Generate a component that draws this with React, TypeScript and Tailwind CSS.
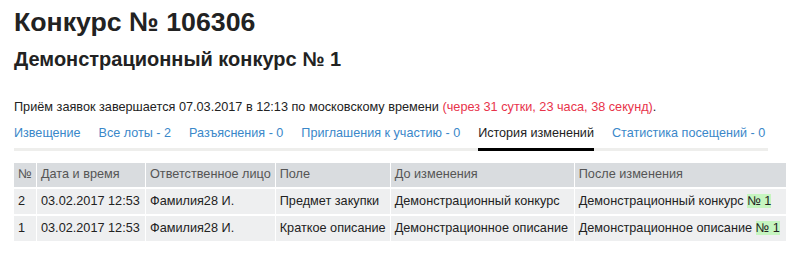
import React from "react";

const tabs = [
  { label: "Извещение" },
  { label: "Все лоты - 2" },
  { label: "Разъяснения - 0" },
  { label: "Приглашения к участию - 0" },
  { label: "История изменений", active: true },
  { label: "Статистика посещений - 0" },
];

const rows = [
  {
    n: "2",
    date: "03.02.2017 12:53",
    person: "Фамилия28 И.",
    field: "Предмет закупки",
    before: "Демонстрационный конкурс",
    after: "Демонстрационный конкурс",
  },
  {
    n: "1",
    date: "03.02.2017 12:53",
    person: "Фамилия28 И.",
    field: "Краткое описание",
    before: "Демонстрационное описание",
    after: "Демонстрационное описание",
  },
];

export default function App() {
  return (
    <div className="w-[800px] h-[258px] bg-white pl-[14px] pt-[6px] text-[#222] overflow-hidden whitespace-nowrap" style={{ fontFamily: '"Liberation Sans", Arial, sans-serif' }}>
      <h1 className="text-[26.7px] font-bold leading-[32px]">Конкурс № 106306</h1>
      <h2 className="mt-[9px] text-[20px] font-bold leading-[25px]">Демонстрационный конкурс № 1</h2>

      <p className="mt-[26px] text-[12.7px] leading-[18px]">
        Приём заявок завершается 07.03.2017 в 12:13 по московскому времени{" "}
        <span className="text-[#e8334a]">(через 31 сутки, 23 часа, 38 секунд)</span>.
      </p>

      <div className="mt-[8px] w-[754px] flex gap-[18px] border-b-[3px] border-[#eeeeec] text-[12.6px]">
        {tabs.map((t) => (
          <div
            key={t.label}
            className={
              t.active
                ? "pb-[5px] -mb-[3px] border-b-[3px] border-black text-[#222]"
                : "pb-[5px] text-[#3a87c9]"
            }
          >
            {t.label}
          </div>
        ))}
      </div>

      <table className="mt-[10px] table-fixed border-separate border-spacing-x-[1px] border-spacing-y-[2px] -ml-[1px] text-[12.7px] text-[#222]">
        <colgroup>
          <col className="w-[22px]" />
          <col className="w-[108px]" />
          <col className="w-[128px]" />
          <col className="w-[114px]" />
          <col className="w-[183px]" />
          <col className="w-[211px]" />
        </colgroup>
        <thead>
          <tr className="bg-[#d9dcdf] text-[#555] text-left">
            <th className="font-normal h-[24px] px-[4px]">№</th>
            <th className="font-normal px-[4px]">Дата и время</th>
            <th className="font-normal px-[4px]">Ответственное лицо</th>
            <th className="font-normal px-[4px]">Поле</th>
            <th className="font-normal px-[4px]">До изменения</th>
            <th className="font-normal px-[4px]">После изменения</th>
          </tr>
        </thead>
        <tbody>
          {rows.map((r) => (
            <tr key={r.n} className="bg-[#eeeff0]">
              <td className="h-[25px] px-[4px]">{r.n}</td>
              <td className="px-[4px]">{r.date}</td>
              <td className="px-[4px]">{r.person}</td>
              <td className="px-[4px]">{r.field}</td>
              <td className="px-[4px]">{r.before}</td>
              <td className="px-[4px]">
                {r.after} <span className="bg-[#c6f5c0]">№ 1</span>
              </td>
            </tr>
          ))}
        </tbody>
      </table>
    </div>
  );
}
